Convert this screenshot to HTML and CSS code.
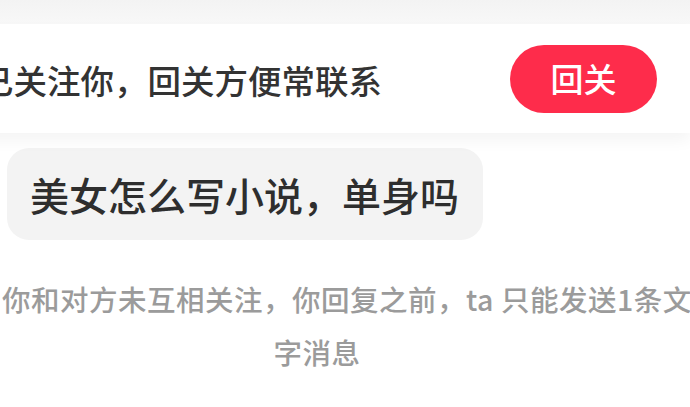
FILE: index.html
```html
<!DOCTYPE html>
<html lang="zh-CN">
<head>
<meta charset="utf-8">
<title>私信</title>
<link rel="stylesheet" href="styles.css">
</head>
<body>
<div class="page">
  <div class="top-strip"></div>
  <div class="follow-card">
    <span class="follow-text">已关注你，回关方便常联系</span>
    <button class="follow-btn">回关</button>
  </div>
  <div class="messages">
    <div class="bubble">美女怎么写小说，单身吗</div>
  </div>
  <p class="notice">你和对方未互相关注，你回复之前，ta 只能发送1条文<br>字消息</p>
</div>
</body>
</html>
```

FILE: styles.css
```css
html, body {
  margin: 0;
  padding: 0;
  background: #ffffff;
}
body {
  width: 690px;
  height: 407px;
  overflow: hidden;
  font-family: "Noto Sans CJK SC", "Noto Sans", sans-serif;
}
.page {
  display: flex;
  flex-direction: column;
}
.top-strip {
  height: 24px;
  background: linear-gradient(#f3f3f3, #f8f8f8);
}
.follow-card {
  height: 109px;
  background: #ffffff;
  display: flex;
  align-items: center;
  justify-content: space-between;
  padding: 0 33px 0 0;
  margin-left: -20px;
  box-shadow: 0 8px 14px rgba(0, 0, 0, 0.045);
  position: relative;
  z-index: 1;
}
.follow-text {
  font-size: 33.5px;
  font-weight: 500;
  color: #333333;
  line-height: 1;
  margin-top: 2px;
}
.follow-btn {
  width: 147px;
  height: 68px;
  border: none;
  border-radius: 34px;
  background: #fe2c4b;
  color: #ffffff;
  font-family: inherit;
  font-size: 33px;
  font-weight: 500;
  padding: 0;
  line-height: 1;
}
.messages {
  padding: 15px 0 0 7px;
  display: flex;
}
.bubble {
  height: 92px;
  box-sizing: border-box;
  padding: 0 24px 0 23px;
  display: flex;
  align-items: center;
  background: #f3f3f3;
  border-radius: 22px;
  font-size: 39px;
  font-weight: 500;
  color: #2e2e2e;
  line-height: 1;
}
.notice {
  margin: 32px 0 0 2px;
  width: 630px;
  text-align: center;
  white-space: nowrap;
  font-size: 28.5px;
  font-weight: 500;
  letter-spacing: 0.5px;
  line-height: 53px;
  color: #9b9b9b;
}
```
